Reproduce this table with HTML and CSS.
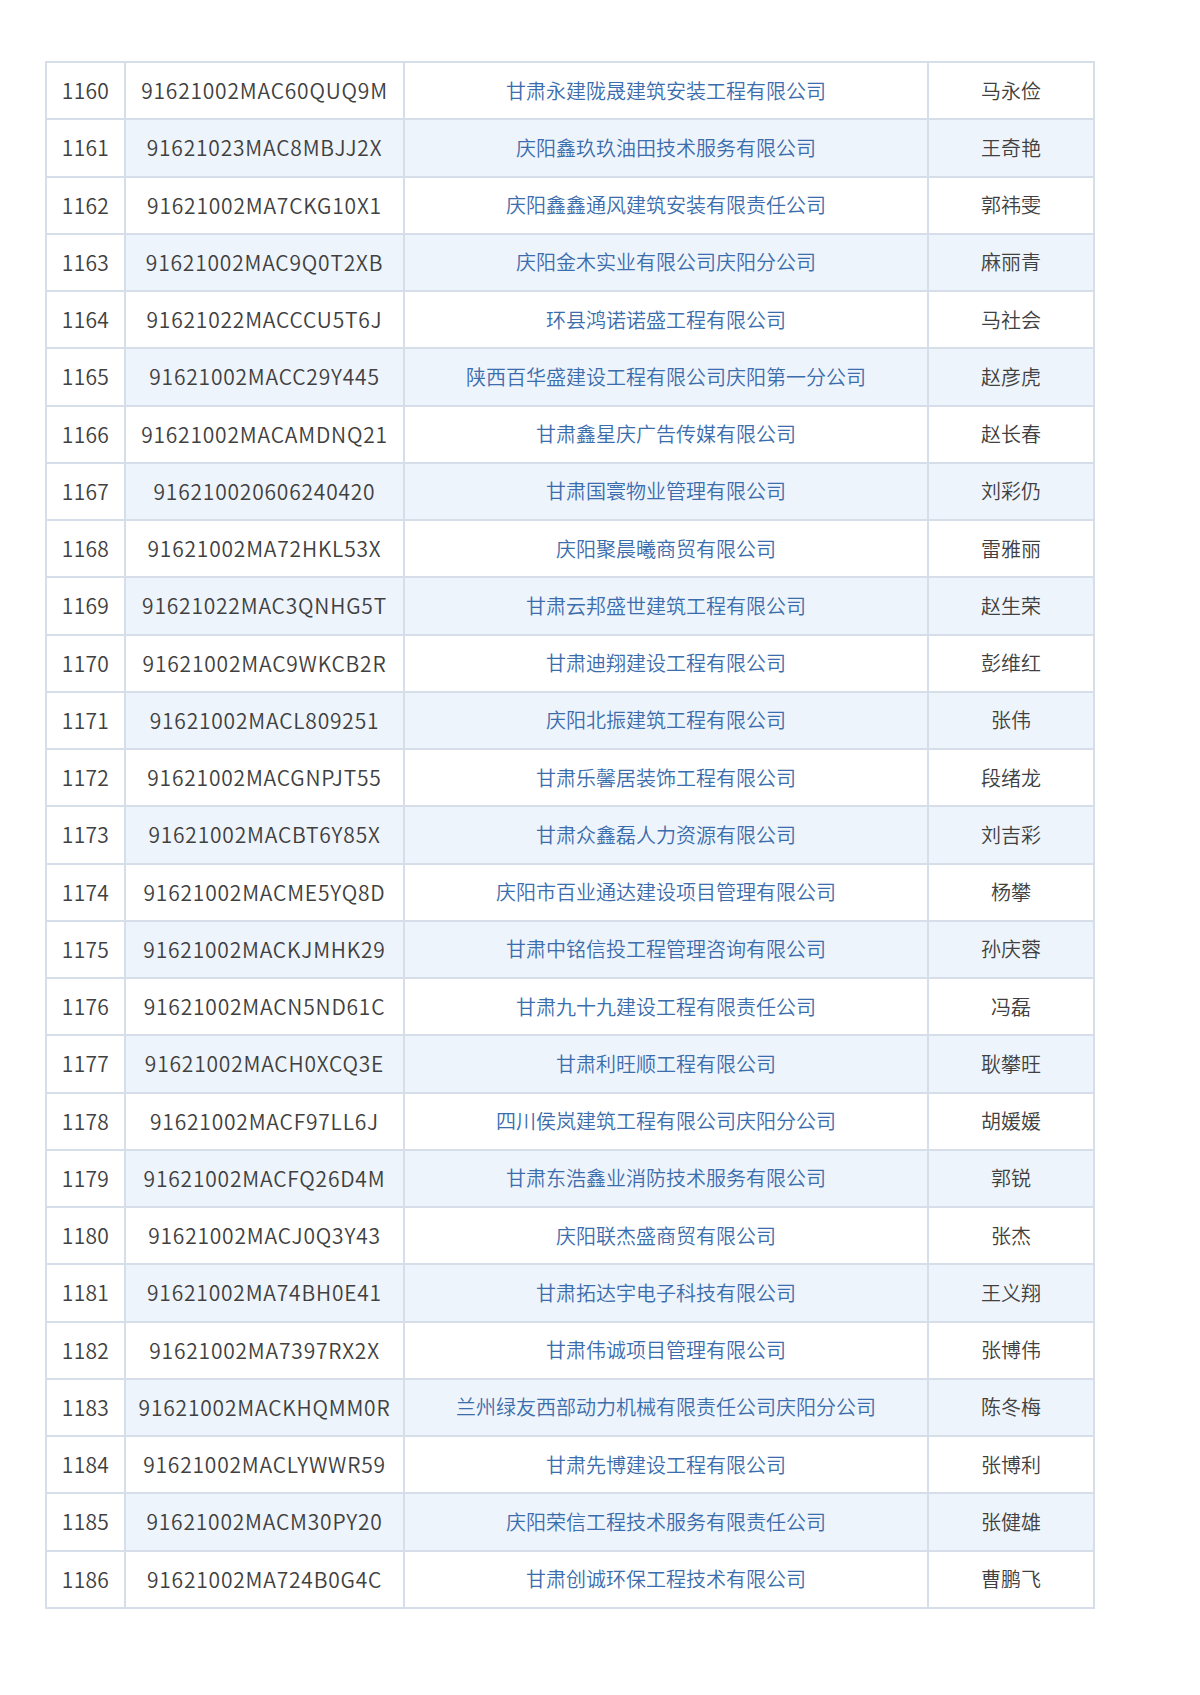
FILE: index.html
```html
<!DOCTYPE html>
<html lang="zh-CN">
<head>
<meta charset="utf-8">
<title>名单</title>
<link rel="stylesheet" href="styles.css">
</head>
<body>
<div class="page">
<table class="list">
<colgroup><col class="c1"><col class="c2"><col class="c3"><col class="c4"></colgroup>
<tbody>
<tr><td class="no">1160</td><td class="code">91621002MAC60QUQ9M</td><td class="co">甘肃永建陇晟建筑安装工程有限公司</td><td>马永俭</td></tr>
<tr><td class="no">1161</td><td class="code">91621023MAC8MBJJ2X</td><td class="co">庆阳鑫玖玖油田技术服务有限公司</td><td>王奇艳</td></tr>
<tr><td class="no">1162</td><td class="code">91621002MA7CKG10X1</td><td class="co">庆阳鑫鑫通风建筑安装有限责任公司</td><td>郭祎雯</td></tr>
<tr><td class="no">1163</td><td class="code">91621002MAC9Q0T2XB</td><td class="co">庆阳金木实业有限公司庆阳分公司</td><td>麻丽青</td></tr>
<tr><td class="no">1164</td><td class="code">91621022MACCCU5T6J</td><td class="co">环县鸿诺诺盛工程有限公司</td><td>马社会</td></tr>
<tr><td class="no">1165</td><td class="code">91621002MACC29Y445</td><td class="co">陕西百华盛建设工程有限公司庆阳第一分公司</td><td>赵彦虎</td></tr>
<tr><td class="no">1166</td><td class="code">91621002MACAMDNQ21</td><td class="co">甘肃鑫星庆广告传媒有限公司</td><td>赵长春</td></tr>
<tr><td class="no">1167</td><td class="code">916210020606240420</td><td class="co">甘肃国寰物业管理有限公司</td><td>刘彩仍</td></tr>
<tr><td class="no">1168</td><td class="code">91621002MA72HKL53X</td><td class="co">庆阳聚晨曦商贸有限公司</td><td>雷雅丽</td></tr>
<tr><td class="no">1169</td><td class="code">91621022MAC3QNHG5T</td><td class="co">甘肃云邦盛世建筑工程有限公司</td><td>赵生荣</td></tr>
<tr><td class="no">1170</td><td class="code">91621002MAC9WKCB2R</td><td class="co">甘肃迪翔建设工程有限公司</td><td>彭维红</td></tr>
<tr><td class="no">1171</td><td class="code">91621002MACL809251</td><td class="co">庆阳北振建筑工程有限公司</td><td>张伟</td></tr>
<tr><td class="no">1172</td><td class="code">91621002MACGNPJT55</td><td class="co">甘肃乐馨居装饰工程有限公司</td><td>段绪龙</td></tr>
<tr><td class="no">1173</td><td class="code">91621002MACBT6Y85X</td><td class="co">甘肃众鑫磊人力资源有限公司</td><td>刘吉彩</td></tr>
<tr><td class="no">1174</td><td class="code">91621002MACME5YQ8D</td><td class="co">庆阳市百业通达建设项目管理有限公司</td><td>杨攀</td></tr>
<tr><td class="no">1175</td><td class="code">91621002MACKJMHK29</td><td class="co">甘肃中铭信投工程管理咨询有限公司</td><td>孙庆蓉</td></tr>
<tr><td class="no">1176</td><td class="code">91621002MACN5ND61C</td><td class="co">甘肃九十九建设工程有限责任公司</td><td>冯磊</td></tr>
<tr><td class="no">1177</td><td class="code">91621002MACH0XCQ3E</td><td class="co">甘肃利旺顺工程有限公司</td><td>耿攀旺</td></tr>
<tr><td class="no">1178</td><td class="code">91621002MACF97LL6J</td><td class="co">四川侯岚建筑工程有限公司庆阳分公司</td><td>胡媛媛</td></tr>
<tr><td class="no">1179</td><td class="code">91621002MACFQ26D4M</td><td class="co">甘肃东浩鑫业消防技术服务有限公司</td><td>郭锐</td></tr>
<tr><td class="no">1180</td><td class="code">91621002MACJ0Q3Y43</td><td class="co">庆阳联杰盛商贸有限公司</td><td>张杰</td></tr>
<tr><td class="no">1181</td><td class="code">91621002MA74BH0E41</td><td class="co">甘肃拓达宇电子科技有限公司</td><td>王义翔</td></tr>
<tr><td class="no">1182</td><td class="code">91621002MA7397RX2X</td><td class="co">甘肃伟诚项目管理有限公司</td><td>张博伟</td></tr>
<tr><td class="no">1183</td><td class="code">91621002MACKHQMM0R</td><td class="co">兰州绿友西部动力机械有限责任公司庆阳分公司</td><td>陈冬梅</td></tr>
<tr><td class="no">1184</td><td class="code">91621002MACLYWWR59</td><td class="co">甘肃先博建设工程有限公司</td><td>张博利</td></tr>
<tr><td class="no">1185</td><td class="code">91621002MACM30PY20</td><td class="co">庆阳荣信工程技术服务有限责任公司</td><td>张健雄</td></tr>
<tr><td class="no">1186</td><td class="code">91621002MA724B0G4C</td><td class="co">甘肃创诚环保工程技术有限公司</td><td>曹鹏飞</td></tr>
</tbody>
</table>
</div>
</body>
</html>
```

FILE: styles.css
```css
html, body {
  margin: 0;
  padding: 0;
  background: #ffffff;
}
.page {
  padding: 61px 0 0 45px;
}
.list {
  border-collapse: collapse;
  table-layout: fixed;
  width: 1048px;
  font-family: "Noto Sans CJK SC", "Noto Sans", sans-serif;
  font-weight: 350;
  font-size: 20px;
  color: #404040;
}
.c1 { width: 79px; }
.c2 { width: 279px; }
.c3 { width: 524px; }
.c4 { width: 166px; }
.list td {
  border: 2px solid #d6dfe9;
  height: 55.26px;
  padding: 0;
  text-align: center;
  vertical-align: middle;
  white-space: nowrap;
  line-height: 1;
}
.list tr:nth-child(even) td {
  background: #eef4fb;
}
.list tr td.no {
  background: #ffffff;
  font-size: 21px;
  letter-spacing: 0.3px;
}
.list td.code {
  font-size: 21px;
  letter-spacing: 0.8px;
}
.list td.co {
  color: #3b6dad;
}
```
